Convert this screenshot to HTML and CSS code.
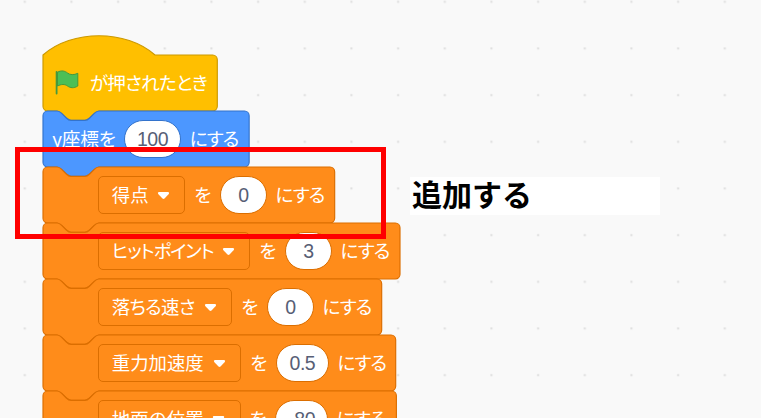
FILE: index.html
```
<!DOCTYPE html>
<html lang="ja">
<head>
<meta charset="utf-8">
<title>Blocks</title>
<link rel="stylesheet" href="styles.css">
</head>
<body>
<main class="workspace">
  <svg class="grid" width="761" height="418"><defs><pattern id="dots" x="23.5" y="0.5" width="46.667" height="46.667" patternUnits="userSpaceOnUse"><rect x="0.3" y="0.3" width="2" height="2" fill="#dddddd"/></pattern></defs><rect width="761" height="418" fill="url(#dots)"/></svg>
  <div class="stack">
    <div class="block event">
      <svg class="shape" width="400" height="90"><path transform="scale(1.16667)" d="M0 0C25-22 71-22 96 0H145.4a4 4 0 0 1 4 4V44a4 4 0 0 1-4 4H48c-2 0-3 1-4 2l-4 4c-1 1-2 2-4 2H24c-2 0-3-1-4-2l-4-4c-1-1-2-2-4-2H4a4 4 0 0 1-4-4z"/></svg>
      <svg class="flag" width="26" height="28" viewBox="0 0 26 28"><path d="M3.5 3.2C7.5 1 11 2 13.5 4s6.500 2.200 10.300 0.300V17c-4 2.500-7.500 2-10.300 0S7.500 15 3.500 17z" fill="#4cbf56" stroke="#45993d"/><path d="M2.600 2.800V24.500" fill="none" stroke="#45993d" stroke-width="1.800" stroke-linecap="round"/></svg>
      <span class="label when">が押されたとき</span>
    </div>
    <div class="block motion">
      <svg class="shape" width="400" height="90"><path transform="scale(1.16667)" d="M0 4A4 4 0 0 1 4 0H12c2 0 3 1 4 2l4 4c1 1 2 2 4 2H36c2 0 3-1 4-2l4-4c1-1 2-2 4-2H172.700a4 4 0 0 1 4 4V44a4 4 0 0 1-4 4H48c-2 0-3 1-4 2l-4 4c-1 1-2 2-4 2H24c-2 0-3-1-4-2l-4-4c-1-1-2-2-4-2H4a4 4 0 0 1-4-4z"/></svg>
      <span class="label coord">y座標を</span><span class="value w3">100</span><span class="label set">にする</span>
    </div>
    <div class="block data">
      <svg class="shape" width="400" height="90"><path transform="scale(1.16667)" d="M0 4A4 4 0 0 1 4 0H12c2 0 3 1 4 2l4 4c1 1 2 2 4 2H36c2 0 3-1 4-2l4-4c1-1 2-2 4-2H246a4 4 0 0 1 4 4V44a4 4 0 0 1-4 4H48c-2 0-3 1-4 2l-4 4c-1 1-2 2-4 2H24c-2 0-3-1-4-2l-4-4c-1-1-2-2-4-2H4a4 4 0 0 1-4-4z"/></svg>
      <span class="field score"><span class="name">得点</span><svg class="arrow" width="13" height="9" viewBox="0 0 13 9"><path d="M1.800 1H11.200Q12.800 1.300 11.800 3L7.500 7.500Q6.500 8.400 5.500 7.500L1.200 3Q.2 1.300 1.800 1z"/></svg></span><span class="label wo">を</span><span class="value">0</span><span class="label set">にする</span>
    </div>
    <div class="block data">
      <svg class="shape" width="400" height="90"><path transform="scale(1.16667)" d="M0 4A4 4 0 0 1 4 0H12c2 0 3 1 4 2l4 4c1 1 2 2 4 2H36c2 0 3-1 4-2l4-4c1-1 2-2 4-2H302a4 4 0 0 1 4 4V44a4 4 0 0 1-4 4H48c-2 0-3 1-4 2l-4 4c-1 1-2 2-4 2H24c-2 0-3-1-4-2l-4-4c-1-1-2-2-4-2H4a4 4 0 0 1-4-4z"/></svg>
      <span class="field hit"><span class="name kata">ヒットポイント</span><svg class="arrow" width="13" height="9" viewBox="0 0 13 9"><path d="M1.800 1H11.200Q12.800 1.300 11.800 3L7.500 7.500Q6.500 8.400 5.500 7.500L1.200 3Q.2 1.300 1.800 1z"/></svg></span><span class="label wo">を</span><span class="value">3</span><span class="label set">にする</span>
    </div>
    <div class="block data">
      <svg class="shape" width="400" height="90"><path transform="scale(1.16667)" d="M0 4A4 4 0 0 1 4 0H12c2 0 3 1 4 2l4 4c1 1 2 2 4 2H36c2 0 3-1 4-2l4-4c1-1 2-2 4-2H286.300a4 4 0 0 1 4 4V44a4 4 0 0 1-4 4H48c-2 0-3 1-4 2l-4 4c-1 1-2 2-4 2H24c-2 0-3-1-4-2l-4-4c-1-1-2-2-4-2H4a4 4 0 0 1-4-4z"/></svg>
      <span class="field fall"><span class="name mixed">落ちる速さ</span><svg class="arrow" width="13" height="9" viewBox="0 0 13 9"><path d="M1.800 1H11.200Q12.800 1.300 11.800 3L7.500 7.500Q6.500 8.400 5.500 7.500L1.200 3Q.2 1.300 1.800 1z"/></svg></span><span class="label wo">を</span><span class="value">0</span><span class="label set">にする</span>
    </div>
    <div class="block data">
      <svg class="shape" width="400" height="90"><path transform="scale(1.16667)" d="M0 4A4 4 0 0 1 4 0H12c2 0 3 1 4 2l4 4c1 1 2 2 4 2H36c2 0 3-1 4-2l4-4c1-1 2-2 4-2H298.300a4 4 0 0 1 4 4V44a4 4 0 0 1-4 4H48c-2 0-3 1-4 2l-4 4c-1 1-2 2-4 2H24c-2 0-3-1-4-2l-4-4c-1-1-2-2-4-2H4a4 4 0 0 1-4-4z"/></svg>
      <span class="field gravity"><span class="name">重力加速度</span><svg class="arrow" width="13" height="9" viewBox="0 0 13 9"><path d="M1.800 1H11.200Q12.800 1.300 11.800 3L7.500 7.500Q6.500 8.400 5.500 7.500L1.200 3Q.2 1.300 1.800 1z"/></svg></span><span class="label wo">を</span><span class="value w2">0.5</span><span class="label set">にする</span>
    </div>
    <div class="block data">
      <svg class="shape" width="400" height="90"><path transform="scale(1.16667)" d="M0 4A4 4 0 0 1 4 0H12c2 0 3 1 4 2l4 4c1 1 2 2 4 2H36c2 0 3-1 4-2l4-4c1-1 2-2 4-2H298.900a4 4 0 0 1 4 4V44a4 4 0 0 1-4 4H4a4 4 0 0 1-4-4z"/></svg>
      <span class="field ground"><span class="name">地面の位置</span><svg class="arrow" width="13" height="9" viewBox="0 0 13 9"><path d="M1.800 1H11.200Q12.800 1.300 11.800 3L7.500 7.500Q6.500 8.400 5.500 7.500L1.200 3Q.2 1.300 1.800 1z"/></svg></span><span class="label wo">を</span><span class="value w2">-80</span><span class="label set">にする</span>
    </div>
  </div>
  <div class="highlight"></div>
  <div class="note">追加する</div>
</main>
</body>
</html>
```
FILE: styles.css
```
* { box-sizing: border-box; }
body { margin: 0; background: #f9f9f9; }
.workspace {
  position: relative;
  width: 761px;
  height: 418px;
  overflow: hidden;
  font-family: "Noto Sans CJK JP", sans-serif;
  font-size: 18.67px;
}
.grid { position: absolute; left: 0; top: 0; }
.stack { padding: 55px 0 0 42.8px; }
.block {
  position: relative;
  display: flex;
  align-items: center;
  height: 56px;
  color: #fff;
  white-space: nowrap;
}
.shape { position: absolute; left: 0; top: 0; overflow: visible; z-index: 0; }
.shape path { stroke-width: 1; }
.event .shape path { fill: #ffbf00; stroke: #c90; }
.motion .shape path { fill: #4c97ff; stroke: #3373cc; }
.data .shape path { fill: #ff8c1a; stroke: #db6e00; }
.flag, .label, .value, .field { position: relative; flex: none; }
.flag { margin: 0 0 0 11px; }
.label { line-height: 28px; padding-bottom: 2px; font-feature-settings: "palt"; }
.when { margin-left: 10px; letter-spacing: -0.75px; }
.coord { width: 72.200px; margin-left: 9.500px; letter-spacing: -0.2px; }
.wo { width: 35.200px; padding-left: 8.700px; }
.set { padding-left: 8.700px; letter-spacing: -1px; }
.field {
  display: flex;
  align-items: center;
  justify-content: space-between;
  height: 38px;
  padding: 0 14.600px 0 12.300px;
  border: 1.167px solid #db6e00;
  border-radius: 5px;
  line-height: 28px;
}
.data .field { margin-left: 55.700px; }
.name { padding-bottom: 2px; font-size: 18.400px; }
.score { width: 87px; }
.hit { width: 152px; }
.fall { width: 134px; }
.gravity { width: 143px; }
.ground { width: 142.300px; }
.kata, .mixed { font-feature-settings: "palt"; }
.kata { letter-spacing: -1.100px; }
.mixed { letter-spacing: -0.600px; }
.arrow { fill: #fff; flex: none; }
.value {
  width: 46.700px;
  height: 38px;
  margin-left: -0.500px;
  border: 1px solid #db6e00;
  border-radius: 19px;
  background: #fff;
  color: #575e75;
  font-family: "Liberation Sans", sans-serif;
  font-size: 19.500px;
  letter-spacing: -0.500px;
  line-height: 37px;
  text-align: center;
}
.motion .value { border-color: #3373cc; }
.w2 { width: 52.500px; }
.w3 { width: 57px; }
.highlight {
  position: absolute;
  left: 15px;
  top: 147px;
  width: 371px;
  height: 92px;
  border: 5px solid #f00;
}
.note {
  position: absolute;
  left: 410px;
  top: 177px;
  width: 250px;
  height: 38px;
  padding-left: 2px;
  background: #fff;
  color: #000;
  font-size: 30px;
  font-weight: 700;
  line-height: 32px;
}
```
